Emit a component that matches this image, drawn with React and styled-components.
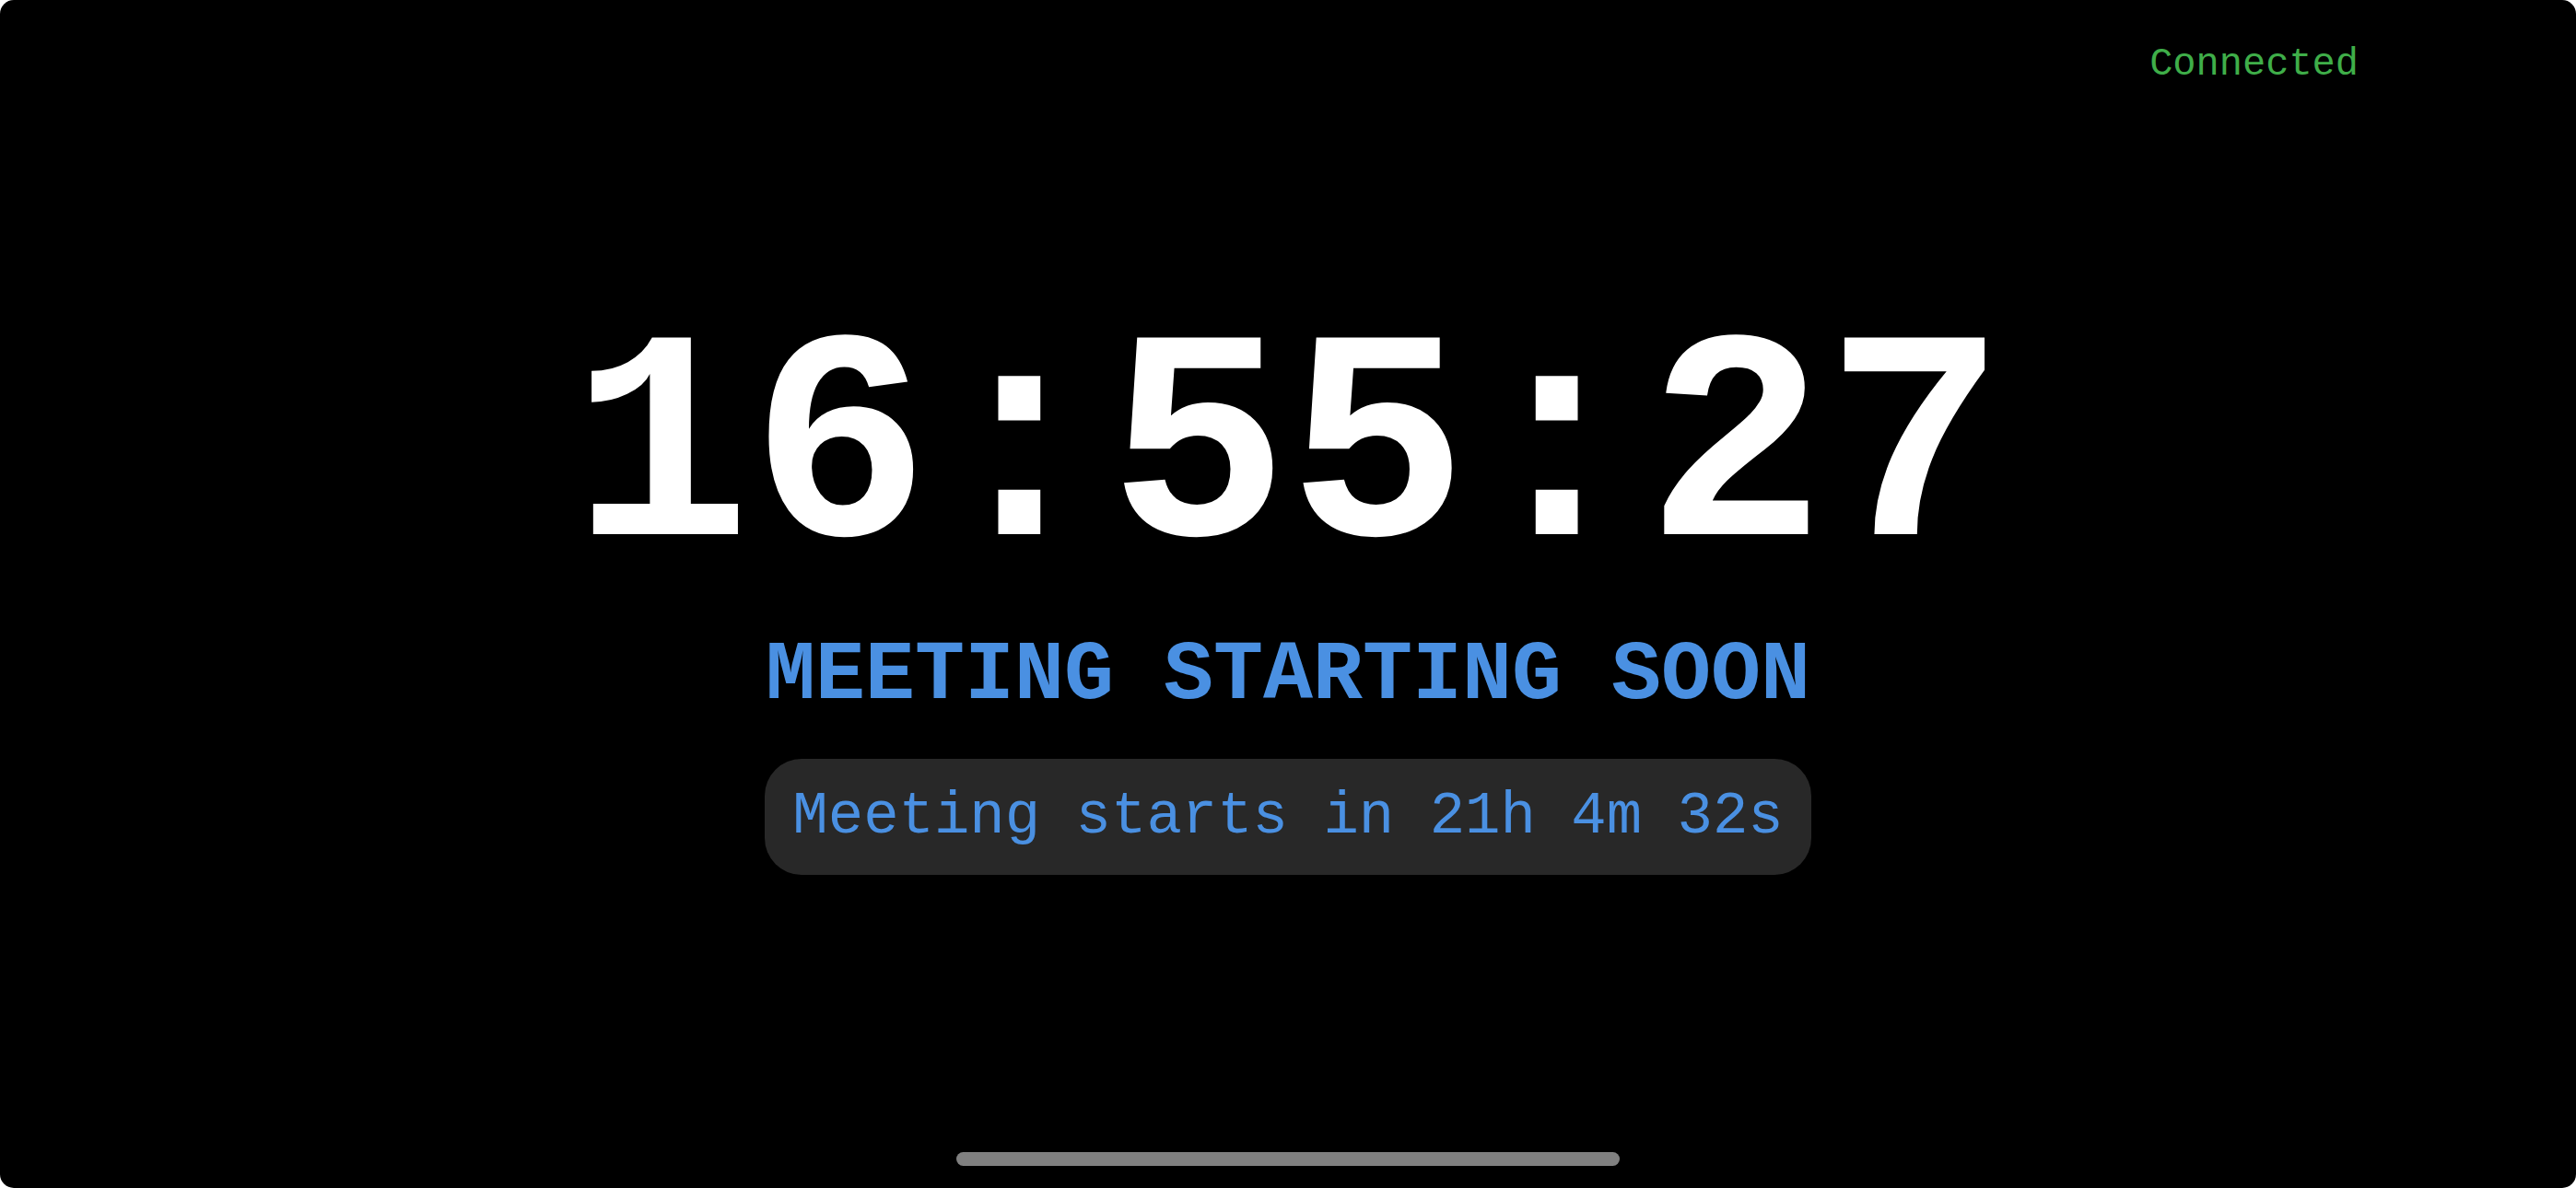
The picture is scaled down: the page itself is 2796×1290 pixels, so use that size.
import React from 'react';
import styled, { createGlobalStyle } from 'styled-components';

const GlobalStyle = createGlobalStyle`
  html, body {
    margin: 0;
    padding: 0;
    background: #ffffff;
  }
  body {
    font-family: "Liberation Mono", "Courier New", monospace;
  }
`;

const Screen = styled.div`
  width: 2796px;
  height: 1290px;
  background: #000000;
  border-radius: 15px;
  overflow: hidden;
  display: grid;
  grid-template-rows: auto 1fr auto;
  box-sizing: border-box;
`;

const StatusBar = styled.div`
  display: flex;
  justify-content: flex-end;
  padding: 42px 236px 0 0;
`;

const Status = styled.span`
  font-family: "Liberation Mono", "Courier New", monospace;
  font-size: 42px;
  line-height: 56px;
  color: ${(p) => (p.$online ? '#3fae49' : '#d9534f')};
`;

const Main = styled.main`
  display: flex;
  flex-direction: column;
  align-items: center;
  justify-content: center;
  padding-bottom: 68px;
`;

const Clock = styled.div`
  font-family: "Liberation Mono", "Courier New", monospace;
  font-weight: 700;
  font-size: 324px;
  line-height: 1;
  color: #ffffff;
`;

const Title = styled.h1`
  margin: 33px 0 0;
  font-family: "Liberation Mono", "Courier New", monospace;
  font-weight: 700;
  font-size: 90px;
  line-height: 1;
  color: #4a90e2;
`;

const Countdown = styled.div`
  margin-top: 45px;
  padding: 30px;
  border-radius: 40px;
  background: #282828;
  font-family: "Liberation Mono", "Courier New", monospace;
  font-size: 64px;
  line-height: 66px;
  color: #4a90e2;
`;

const Footer = styled.div`
  display: flex;
  justify-content: center;
  padding: 0 0 24px;
`;

const HomeIndicator = styled.div`
  width: 720px;
  height: 15px;
  border-radius: 8px;
  background: #808080;
`;

export default function App() {
  return (
    <>
      <GlobalStyle />
      <Screen>
        <StatusBar>
          <Status $online>Connected</Status>
        </StatusBar>
        <Main>
          <Clock>16:55:27</Clock>
          <Title>MEETING STARTING SOON</Title>
          <Countdown>Meeting starts in 21h 4m 32s</Countdown>
        </Main>
        <Footer>
          <HomeIndicator />
        </Footer>
      </Screen>
    </>
  );
}
